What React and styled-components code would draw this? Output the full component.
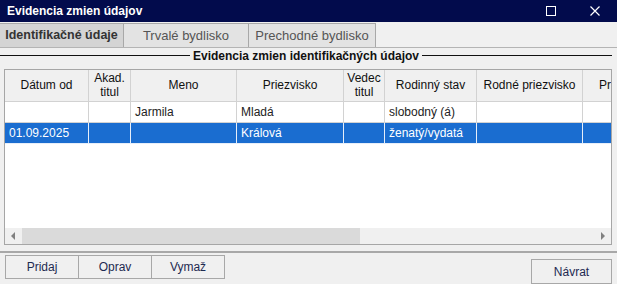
import React from "react";
import styled, { createGlobalStyle } from "styled-components";

const GlobalStyle = createGlobalStyle`
  html, body {
    margin: 0;
    padding: 0;
    background: #f0f0f0;
  }
  body {
    font-family: "Liberation Sans", Arial, sans-serif;
    font-size: 12px;
    color: #1e1e1e;
  }
`;

const Window = styled.div`
  width: 617px;
  height: 284px;
  display: flex;
  flex-direction: column;
  background: #f0f0f0;
  overflow: hidden;
`;

const TitleBar = styled.div`
  height: 22px;
  background: #020b4c;
  display: flex;
  align-items: center;
  padding-left: 7px;
  color: #fff;
  font-weight: bold;
  font-size: 12px;
`;

const TitleText = styled.div`
  flex: 1;
`;

const TitleButton = styled.div`
  width: 44px;
  height: 22px;
  display: flex;
  align-items: center;
  justify-content: center;
`;

const TabRow = styled.div`
  display: flex;
  margin-top: 1px;
  height: 24px;
  border-bottom: 1px solid #b4b4b4;
`;

const Tab = styled.div`
  width: ${(p) => p.w}px;
  box-sizing: border-box;
  border: 1px solid #a8a8a8;
  border-left: ${(p) => (p.first ? "none" : "1px solid #a8a8a8")};
  margin-left: ${(p) => (p.first ? "0" : "-1px")};
  border-bottom: none;
  background: ${(p) => (p.active ? "#d4d4d4" : "#e3e3e3")};
  color: ${(p) => (p.active ? "#333" : "#555")};
  font-weight: ${(p) => (p.active ? "bold" : "normal")};
  font-size: ${(p) => (p.active ? "12.5px" : "13px")};
  display: flex;
  align-items: center;
  justify-content: center;
`;

const Legend = styled.div`
  display: flex;
  align-items: center;
  margin-top: 1px;
  height: 14px;
  padding-right: 5px;
  font-weight: bold;
  color: #111;
  font-size: 12px;
  gap: 3px;
  &::before,
  &::after {
    content: "";
    flex: 1;
    height: 1px;
    background: #111;
  }
`;

const TableBox = styled.div`
  margin: 6px 5px 0 4px;
  height: 178px;
  border: 1px solid #a6a6a6;
  background: #fff;
  display: flex;
  flex-direction: column;
  box-sizing: border-box;
`;

const Viewport = styled.div`
  flex: 1;
  overflow: hidden;
`;

const Grid = styled.div`
  display: grid;
  grid-template-columns: 84px 42px 106px 107px 41px 92px 106px 80px;
  width: 658px;
`;

const HeadCell = styled.div`
  height: 32px;
  box-sizing: border-box;
  background: #f0f0f0;
  border-right: 1px solid #d2d2d2;
  border-bottom: 1px solid #d2d2d2;
  display: flex;
  align-items: center;
  justify-content: ${(p) => (p.clip ? "flex-start" : "center")};
  padding-left: ${(p) => (p.clip ? "16px" : "0")};
  text-align: center;
  line-height: 14px;
  color: #111;
  font-size: 12px;
  white-space: nowrap;
`;

const Cell = styled.div`
  height: 21px;
  box-sizing: border-box;
  border-right: 1px solid ${(p) => (p.sel ? "#e6eef9" : "#d2d2d2")};
  border-bottom: 1px solid ${(p) => (p.sel ? "#e6eef9" : "#d2d2d2")};
  background: ${(p) => (p.sel ? "#1a6dd0" : "#fff")};
  color: ${(p) => (p.sel ? "#fff" : "#222")};
  padding-left: 4px;
  display: flex;
  align-items: center;
  font-size: 12px;
  white-space: nowrap;
  overflow: hidden;
`;

const ScrollBar = styled.div`
  height: 16px;
  display: flex;
  background: #f0f0f0;
`;

const ScrollArrow = styled.div`
  width: 17px;
  display: flex;
  align-items: center;
  justify-content: center;
`;

const ScrollTrack = styled.div`
  flex: 1;
  display: flex;
`;

const ScrollThumb = styled.div`
  width: 338px;
  background: #dadada;
`;

const Divider = styled.div`
  margin-top: 6px;
  height: 2px;
  background: #a8a8a8;
`;

const Footer = styled.div`
  display: flex;
  justify-content: space-between;
  align-items: flex-start;
  padding: 2px 5px 0 5px;
`;

const ButtonGroup = styled.div`
  display: flex;
`;

const Button = styled.button`
  width: ${(p) => p.w || 74}px;
  height: ${(p) => p.h || 24}px;
  margin-top: ${(p) => p.top || 0}px;
  margin-left: ${(p) => (p.join ? "-1px" : "0")};
  background: #f0f0f0;
  border: 1px solid #a8a8a8;
  font-family: "Liberation Sans", Arial, sans-serif;
  font-size: 12px;
  color: #1e2a50;
  padding: 0;
`;

const cols = [
  "Dátum od",
  "Akad.\ntitul",
  "Meno",
  "Priezvisko",
  "Vedec\ntitul",
  "Rodinný stav",
  "Rodné priezvisko",
  "Pr",
];

const rows = [
  { sel: false, data: ["", "", "Jarmila", "Mladá", "", "slobodný (á)", "", ""] },
  { sel: true, data: ["01.09.2025", "", "", "Králová", "", "ženatý/vydatá", "", ""] },
];

function App() {
  return (
    <>
      <GlobalStyle />
      <Window>
        <TitleBar>
          <TitleText>Evidencia zmien údajov</TitleText>
          <TitleButton>
            <svg width="10" height="10" viewBox="0 0 10 10">
              <rect x="0.5" y="0.5" width="9" height="9" fill="none" stroke="#fff" strokeWidth="1" />
            </svg>
          </TitleButton>
          <TitleButton>
            <svg width="10" height="10" viewBox="0 0 10 10">
              <path d="M0.5 0.5 L9.5 9.5 M9.5 0.5 L0.5 9.5" stroke="#fff" strokeWidth="1.2" />
            </svg>
          </TitleButton>
        </TitleBar>

        <TabRow>
          <Tab w={124} first active>Identifikačné údaje</Tab>
          <Tab w={126}>Trvalé bydlisko</Tab>
          <Tab w={128}>Prechodné bydlisko</Tab>
        </TabRow>

        <Legend>Evidencia zmien identifikačných údajov</Legend>

        <TableBox>
          <Viewport>
            <Grid>
              {cols.map((c, i) => (
                <HeadCell key={i} clip={i === cols.length - 1}>
                  {c.split("\n").map((l, j) => (
                    <React.Fragment key={j}>
                      {j > 0 && <br />}
                      {l}
                    </React.Fragment>
                  ))}
                </HeadCell>
              ))}
              {rows.map((r, i) =>
                r.data.map((d, j) => (
                  <Cell key={i + "-" + j} sel={r.sel}>
                    {d}
                  </Cell>
                ))
              )}
            </Grid>
          </Viewport>
          <ScrollBar>
            <ScrollArrow>
              <svg width="5" height="8" viewBox="0 0 5 8">
                <path d="M4 0 L0 4 L4 8 Z" fill="#808080" />
              </svg>
            </ScrollArrow>
            <ScrollTrack>
              <ScrollThumb />
            </ScrollTrack>
            <ScrollArrow>
              <svg width="5" height="8" viewBox="0 0 5 8">
                <path d="M1 0 L5 4 L1 8 Z" fill="#808080" />
              </svg>
            </ScrollArrow>
          </ScrollBar>
        </TableBox>

        <Divider />

        <Footer>
          <ButtonGroup>
            <Button>Pridaj</Button>
            <Button join>Oprav</Button>
            <Button join>Vymaž</Button>
          </ButtonGroup>
          <Button w={81} h={25} top={4}>Návrat</Button>
        </Footer>
      </Window>
    </>
  );
}

export default App;
